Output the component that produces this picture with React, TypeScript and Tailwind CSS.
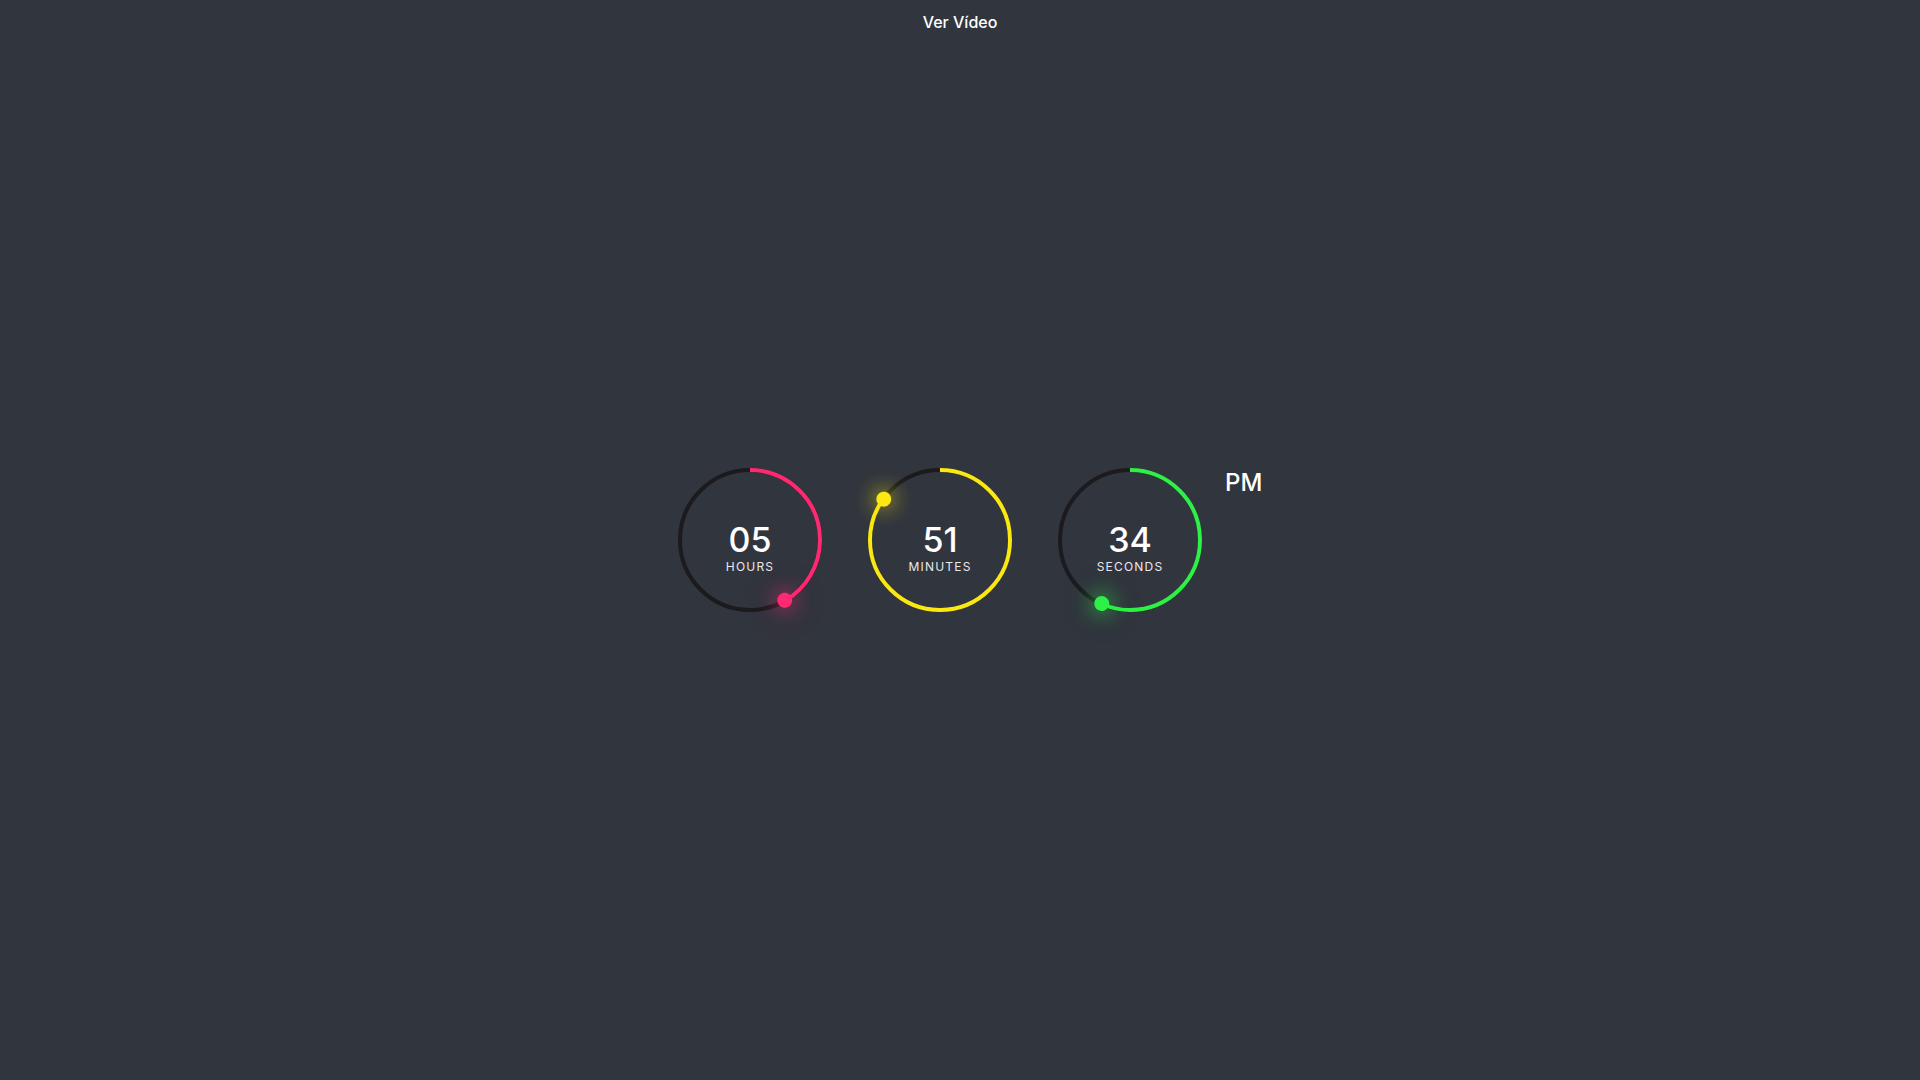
import React from "react";

type Unit = {
  value: string;
  label: string;
  frac: number;
  color: string;
  glow: string;
};

const R = 70;
const C = 2 * Math.PI * R;

const units: Unit[] = [
  { value: "05", label: "Hours", frac: 5 / 12, color: "#ff2972", glow: "shadow-[0_0_20px_#ff2972,0_0_40px_#ff297255]" },
  { value: "51", label: "Minutes", frac: 51 / 60, color: "#fbe711", glow: "shadow-[0_0_20px_#fbe711,0_0_40px_#fbe71155]" },
  { value: "34", label: "Seconds", frac: 34 / 60, color: "#2ef046", glow: "shadow-[0_0_20px_#2ef046,0_0_40px_#2ef04655]" },
];

const Ring: React.FC<{ unit: Unit }> = ({ unit }) => {
  return (
    <div className="relative flex h-[150px] w-[150px] items-center justify-center">
      <svg className="absolute inset-0" width="150" height="150" viewBox="0 0 150 150">
        <circle cx="75" cy="75" r={R} fill="none" stroke="#1b1b1d" strokeWidth="4" />
        <circle
          cx="75"
          cy="75"
          r={R}
          fill="none"
          stroke={unit.color}
          strokeWidth="4"
          strokeDasharray={C}
          strokeDashoffset={C * (1 - unit.frac)}
          transform="rotate(-90 75 75)"
        />
      </svg>
      {/* dot at the end of the arc */}
      <div className="absolute inset-0 z-10" style={{ transform: `rotate(${unit.frac * 360}deg)` }}>
        <div
          className={`absolute left-1/2 top-[-2.5px] h-[15px] w-[15px] -translate-x-1/2 rounded-full ${unit.glow}`}
          style={{ background: unit.color }}
        />
      </div>
      <div className="relative flex flex-col items-center pt-[15px] text-white">
        <span className="text-[34px] font-medium leading-none">{unit.value}</span>
        <span className="mt-1 text-[12px] uppercase leading-none tracking-[0.1em] text-[#e8e8ec]">
          {unit.label}
        </span>
      </div>
    </div>
  );
};

export default function App() {
  return (
    <div className="flex h-screen w-full flex-col bg-[#31353e] font-['Inter',sans-serif]">
      <div className="flex h-[40px] justify-center pt-[10px]">
        <span className="text-[16px] font-medium leading-6 text-white">Ver Vídeo</span>
      </div>
      <div className="flex flex-1 items-center justify-center">
        <div className="flex items-start gap-10">
          {units.map((u) => (
            <Ring key={u.label} unit={u} />
          ))}
          <div className="-ml-5 w-5 whitespace-nowrap text-[24px] font-medium text-white">PM</div>
        </div>
      </div>
      <div className="h-[40px]" />
    </div>
  );
}
